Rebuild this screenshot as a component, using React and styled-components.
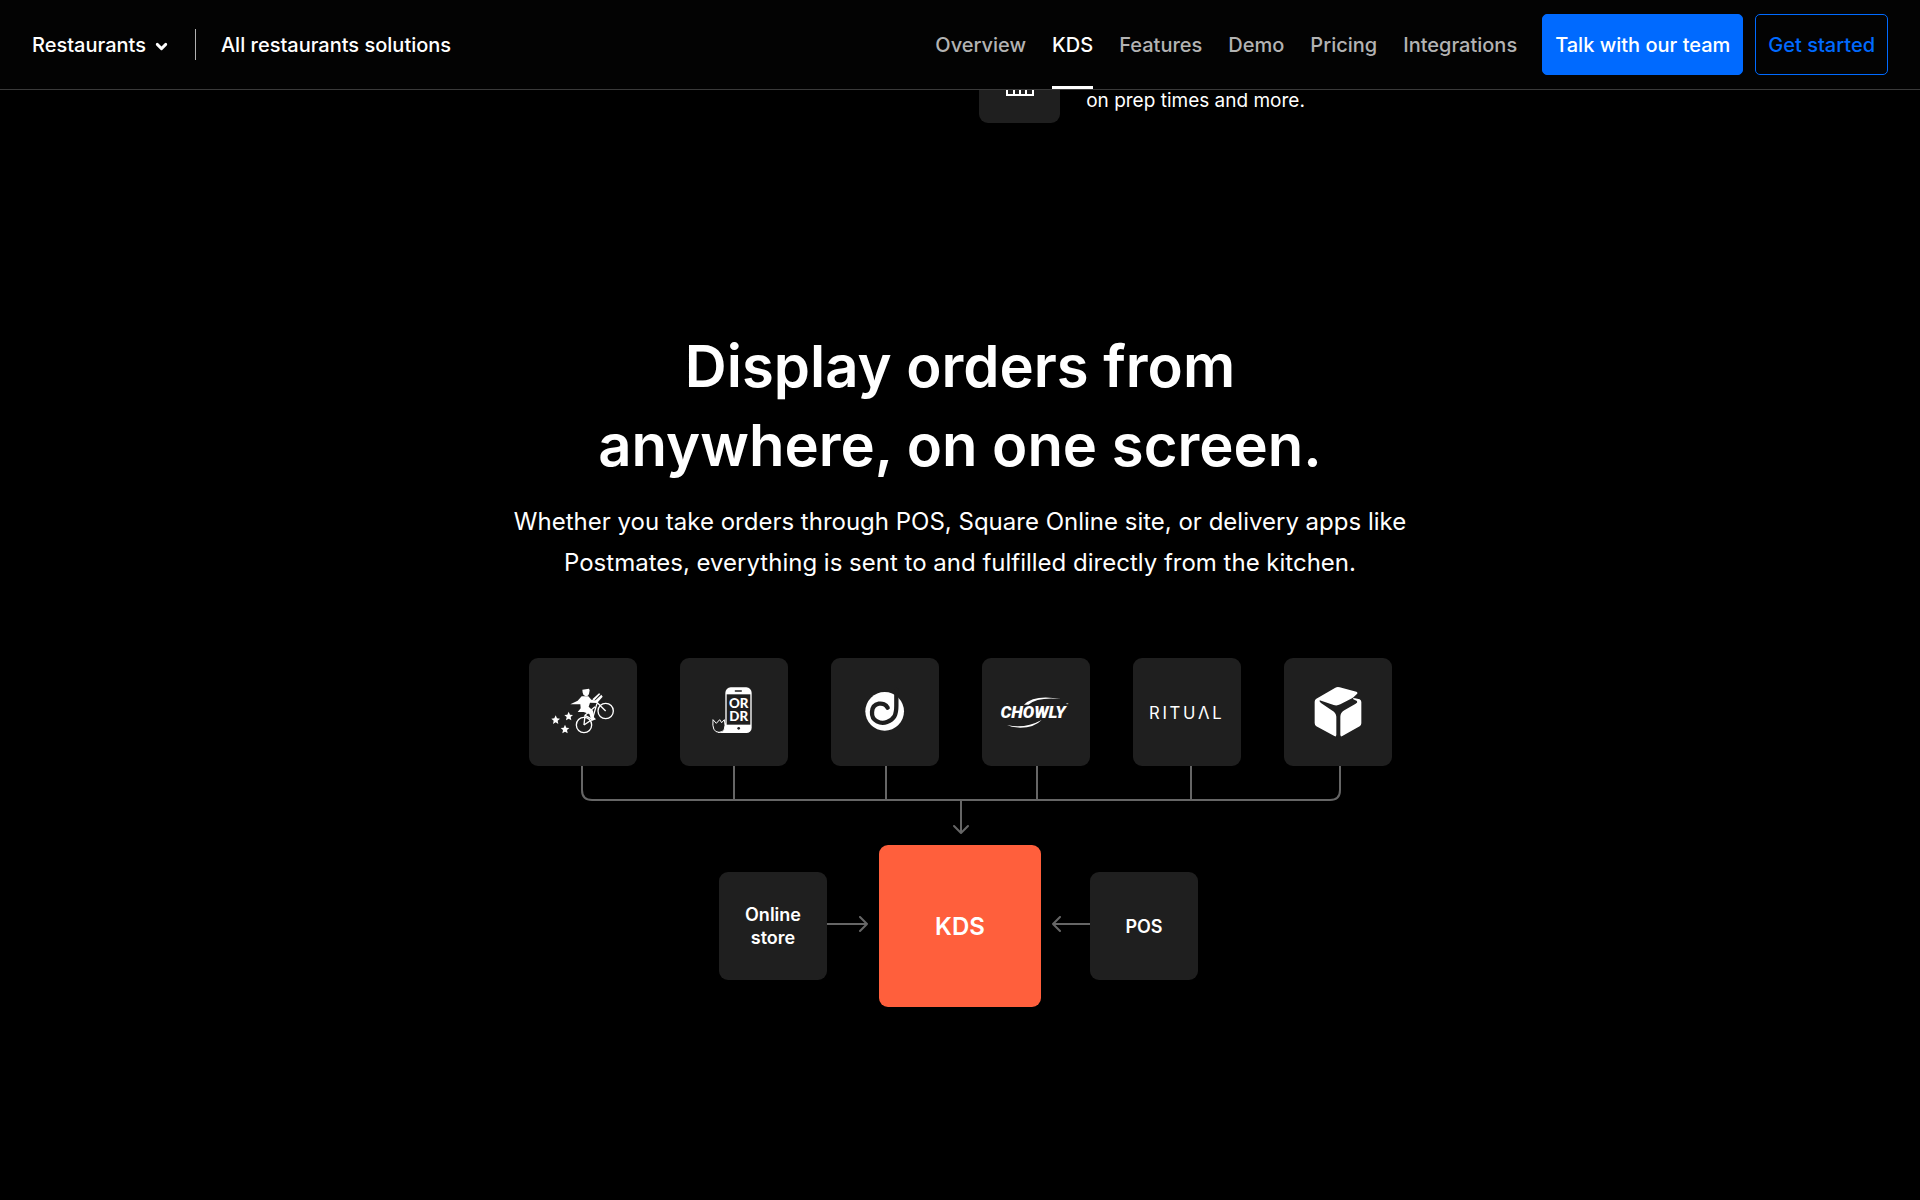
import styled, { createGlobalStyle, ThemeProvider } from "styled-components";
import { ChevronDown } from "lucide-react";

const theme = {
    fondo: "#000000",
    barra: "#030303",
    tarjeta: "#1f1f1f",
    texto: "#ffffff",
    textoSuave: "#b3b3b3",
    linea: "#666666",
    azul: "#006aff",
    naranja: "#ff5f3c",
};

const GlobalStyle = createGlobalStyle`
    *, *::before, *::after {
        box-sizing: border-box;
    }
    body {
        margin: 0;
        background: ${theme.fondo};
        color: ${theme.texto};
        font-family: Inter, "Liberation Sans", sans-serif;
        font-size: 20px;
    }
    h2, p {
        margin: 0;
    }
`;

const Header = styled.header`
    position: sticky;
    top: 0;
    z-index: 1;
    display: flex;
    justify-content: space-between;
    min-height: 90px;
    padding: 0 32px;
    background: ${({theme}) => theme.barra};
    border-bottom: 1px solid #3a3a3a;
    font-weight: 500;
    line-height: 24px;
    white-space: nowrap;
`;

const HeaderGroup = styled.div`
    display: flex;
    align-items: center;
    gap: 25px;
`;

const MenuButton = styled.button`
    display: flex;
    align-items: center;
    gap: 7px;
    padding: 0;
    border: 0;
    background: none;
    color: inherit;
    font: inherit;
    cursor: pointer;
    svg {
        margin-top: 3px;
    }
`;

const Divider = styled.span`
    width: 1px;
    height: 31px;
    background: #b0b0b0;
`;

const HomeLink = styled.a`
    color: inherit;
    text-decoration: none;
`;

const Nav = styled.nav`
    display: flex;
    align-self: stretch;
    gap: 26px;
`;

const NavLink = styled.a`
    display: flex;
    align-items: center;
    border-top: 3px solid transparent;
    border-bottom: 3px solid ${({$active, theme}) => $active ? theme.texto : "transparent"};
    color: ${({$active, theme}) => $active ? theme.texto : theme.textoSuave};
    text-decoration: none;
`;

const Actions = styled.div`
    display: flex;
    gap: 12px;
`;

const ActionButton = styled.button`
    height: 61px;
    padding: 0 12px;
    border: 1px solid ${({theme}) => theme.azul};
    border-radius: 5px;
    background: ${({$filled, theme}) => $filled ? theme.azul : "transparent"};
    color: ${({$filled, theme}) => $filled ? theme.texto : theme.azul};
    font: inherit;
    cursor: pointer;
`;

const Feature = styled.section`
    display: flex;
    align-items: flex-end;
    gap: 26px;
    height: 33px;
    padding-left: 51%;
    overflow: hidden;
`;

const FeatureIcon = styled.div`
    display: flex;
    align-items: center;
    justify-content: center;
    width: 81px;
    height: 81px;
    border-radius: 9px;
    background: ${({theme}) => theme.tarjeta};
`;

const FeatureText = styled.p`
    font-size: 19px;
    line-height: 32px;
    padding-bottom: 6px;
`;

const Orders = styled.section`
    display: flex;
    flex-direction: column;
    align-items: center;
    padding: 204px 32px 192px;
    text-align: center;
`;

const Title = styled.h2`
    font-size: 58px;
    font-weight: 600;
    line-height: 79px;
`;

const Detail = styled.p`
    max-width: 930px;
    margin-top: 16px;
    font-size: 24px;
    line-height: 41px;
`;

const Apps = styled.div`
    display: flex;
    gap: 43px;
    margin-top: 75px;
`;

const Tile = styled.div`
    display: flex;
    align-items: center;
    justify-content: center;
    width: ${({$main}) => $main ? 162 : 108}px;
    height: ${({$main}) => $main ? 162 : 108}px;
    border-radius: 9px;
    background: ${({$main, theme}) => $main ? theme.naranja : theme.tarjeta};
    font-size: ${({$main}) => $main ? 24 : 18}px;
    font-weight: 600;
    line-height: 23px;
`;

const Lines = styled.svg`
    display: block;
    flex: none;
    fill: none;
    stroke: ${({theme}) => theme.linea};
    stroke-width: 2;
    stroke-linecap: round;
    stroke-linejoin: round;
`;

const Hub = styled.div`
    display: grid;
    grid-template-columns: 1fr auto 1fr;
    align-items: center;
`;

const Side = styled.div`
    display: flex;
    align-items: center;
    justify-content: ${({$left}) => $left ? "flex-end" : "flex-start"};
`;

const Logo = styled.svg`
    width: 108px;
    height: 108px;
    fill: #ffffff;
`;

const star = "M0 -14 L4 -5 L13 -4 L6 2 L8 12 L0 7 L-8 12 L-6 2 L-13 -4 L-4 -5 Z";

function PostmatesLogo() {
    return (
        <Logo viewBox="26 26 324 324" role="img" aria-label="Postmates">
            <g fill="none" stroke="#fff" strokeWidth="4">
                <circle cx="191" cy="227" r="23" />
                <circle cx="256" cy="185" r="23" />
                <path d="M191 227 L194 198 L224 172 M194 198 L216 210 M191 227 L216 210 L230 162 M231 160 L256 185" />
            </g>
            <path d="M186 121 L206 118 L208 123 L206 134 Q203 142 196 141 Q188 139 187 130 Z" />
            <path d="M184 141 L204 141 L213 151 L233 155 L232 161 L209 160 L205 172 L218 184 L221 204 L227 210 L214 215 L207 194 L190 188 L172 188 L181 177 L180 165 L150 165 L172 154 Z" />
            <path d="M216 150 L236 132 L240 134 L221 154 Z M221 157 L243 136 L247 142 L231 160 Z" />
            <path d={star} transform="translate(106 212)" />
            <path d={star} transform="translate(145 201)" />
            <path d={star} transform="translate(134 240)" />
        </Logo>
    );
}

function OrdrLogo() {
    return (
        <Logo viewBox="478 26 324 324" role="img" aria-label="Ordr">
            <rect x="614" y="114" width="79" height="137" rx="16" />
            <path d="M592 251 H650 V220 H614 Q612 244 592 248 Z" />
            <rect x="618" y="135" width="71" height="91" fill="#1f1f1f" />
            <rect x="642" y="123" width="22" height="4" rx="2" fill="#1f1f1f" />
            <circle cx="654" cy="237" r="4" fill="#1f1f1f" />
            <path d="M577 211 L587 222 L597 211 L603 220 L611 211 Q619 249 595 249 Q573 249 577 211 Z" fill="#1f1f1f" stroke="#fff" strokeWidth="3" />
            <text fontFamily="Lato, sans-serif" fontWeight="900" fontSize="40" textAnchor="middle">
                <tspan x="654" y="177">OR</tspan>
                <tspan x="654" y="214">DR</tspan>
            </text>
        </Logo>
    );
}

function SpiralLogo() {
    return (
        <Logo viewBox="32 26 324 324" role="img" aria-label="Delivery app">
            <circle cx="193" cy="186" r="58" />
            <path d="M202 175 C192 156 157 158 155 188 C153 216 182 225 200 218 C222 210 228 196 228 170 V122" fill="none" stroke="#1f1f1f" strokeWidth="13" strokeLinecap="round" />
        </Logo>
    );
}

function ChowlyLogo() {
    return (
        <Logo viewBox="485 26 324 324" role="img" aria-label="Chowly">
            <path d="M611 166 Q642 134 722 149 Q652 142 624 166 Z" />
            <path d="M560 227 Q612 240 664 212 Q642 235 600 235 Q575 234 560 227 Z" />
            <text x="638" y="207" fontFamily="Roboto, sans-serif" fontWeight="900" fontStyle="italic" fontSize="51" textAnchor="middle">CHOWLY</text>
            <text x="738" y="171" fontFamily="Inter, sans-serif" fontSize="9">™</text>
        </Logo>
    );
}

function RitualLogo() {
    return (
        <Logo viewBox="38 26 324 324" role="img" aria-label="Ritual">
            <text x="86" y="208" fontFamily="Inter, sans-serif" fontWeight="400" fontSize="50" letterSpacing="8">RITUΛL</text>
        </Logo>
    );
}

function CubeLogo() {
    return (
        <Logo viewBox="491 26 324 324" role="img" aria-label="Delivery box">
            <path d="M645 115 Q651 112 658 114 L708 127 Q714 130 709 135 L697 146 L704 147 L718 150 Q723 153 723 158 V222 Q723 228 718 231 L666 260 Q660 263 660 258 H648 Q648 263 642 260 L588 231 Q583 228 583 221 V157 Q583 151 588 148 Z" />
            <path d="M598 153 L640 167 Q650 170 660 165 L698 145 L699 150 L710 155 Q713 160 706 163 L672 183 Q660 190 660 202 V264 H648 V202 Q647 190 634 183 L603 162 Q596 158 598 153 Z" fill="#1f1f1f" />
        </Logo>
    );
}

const links = ["Overview", "KDS", "Features", "Demo", "Pricing", "Integrations"];
const logos = [PostmatesLogo, OrdrLogo, SpiralLogo, ChowlyLogo, RitualLogo, CubeLogo];

export default function App() {
    return (
        <ThemeProvider theme={theme}>
            <GlobalStyle />
            <Header>
                <HeaderGroup>
                    <MenuButton type="button">
                        Restaurants
                        <ChevronDown size={17} strokeWidth={4} />
                    </MenuButton>
                    <Divider />
                    <HomeLink href="#restaurants">All restaurants solutions</HomeLink>
                </HeaderGroup>
                <HeaderGroup>
                    <Nav>
                        {links.map((link) => (
                            <NavLink key={link} href={`#${link.toLowerCase()}`} $active={link === "KDS"}>{link}</NavLink>
                        ))}
                    </Nav>
                    <Actions>
                        <ActionButton type="button" $filled>Talk with our team</ActionButton>
                        <ActionButton type="button">Get started</ActionButton>
                    </Actions>
                </HeaderGroup>
            </Header>
            <main>
                <Feature>
                    <FeatureIcon>
                        <svg width="28" height="28" viewBox="0 0 28 28" fill="none" stroke="#fff" strokeWidth="2">
                            <path d="M0 26 H28 M1 4 V27 M8 12 V26 M14 8 V26 M20 14 V26 M27 4 V27" />
                        </svg>
                    </FeatureIcon>
                    <FeatureText>on prep times and more.</FeatureText>
                </Feature>
                <Orders>
                    <Title>Display orders from<br />anywhere, on one screen.</Title>
                    <Detail>
                        Whether you take orders through POS, Square Online site, or delivery apps like
                        Postmates, everything is sent to and fulfilled directly from the kitchen.
                    </Detail>
                    <Apps>
                        {logos.map((AppLogo) => (
                            <Tile key={AppLogo.name}><AppLogo /></Tile>
                        ))}
                    </Apps>
                    <Lines width="864" height="79" viewBox="0 0 864 79" aria-hidden="true">
                        <path d="M54 0 V24 Q54 34 64 34 H802 Q812 34 812 24 V0" />
                        <path d="M206 0 V34 M358 0 V34 M509 0 V34 M663 0 V34" />
                        <path d="M433 34 V66 M426 60 L433 67 L440 60" />
                    </Lines>
                    <Hub>
                        <Side $left>
                            <Tile>Online<br />store</Tile>
                            <Lines width="52" height="20" viewBox="0 0 52 20" aria-hidden="true">
                                <path d="M0 8 H40 M33 1 L40 8 L33 15" />
                            </Lines>
                        </Side>
                        <Tile $main>KDS</Tile>
                        <Side>
                            <Lines width="49" height="20" viewBox="0 0 49 20" aria-hidden="true">
                                <path d="M49 8 H12 M19 1 L12 8 L19 15" />
                            </Lines>
                            <Tile>POS</Tile>
                        </Side>
                    </Hub>
                </Orders>
            </main>
        </ThemeProvider>
    );
}
